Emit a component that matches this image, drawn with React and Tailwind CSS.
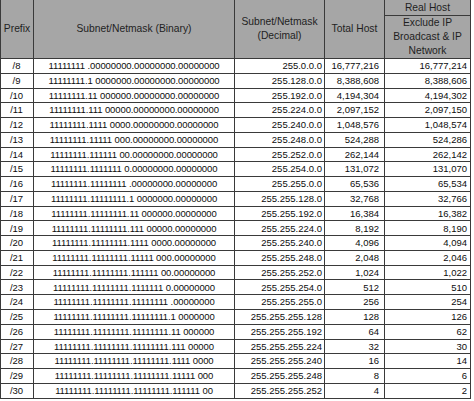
import React from 'react'

const font = { fontFamily: '"Liberation Sans", Arial, sans-serif' }

function binaryMask(p) {
    const bits = '1'.repeat(p) + '0'.repeat(32 - p)
    const dotted = bits.match(/.{8}/g).join('.')
    // split right after the p-th bit
    const idx = p + Math.floor((p - 1) / 8)
    return dotted.slice(0, idx) + ' ' + dotted.slice(idx)
}

function decimalMask(p) {
    const out = []
    for (let i = 0; i < 4; i++) {
        const n = Math.min(8, Math.max(0, p - i * 8))
        out.push(256 - Math.pow(2, 8 - n))
    }
    return out.join('.')
}

const rows = []
for (let p = 8; p <= 30; p++) {
    const total = Math.pow(2, 32 - p)
    rows.push({
        prefix: '/' + p,
        bin: binaryMask(p),
        dec: decimalMask(p),
        total: total.toLocaleString('en-US'),
        real: (total - 2).toLocaleString('en-US'),
    })
}

const head = 'bg-[#a6a6a6] text-[#1f1f1f] border-r border-b border-[#3a3a3a] flex items-center justify-center text-center text-[10.3px] leading-[14px]'
const cell = 'bg-white text-[#0d0d0d] border-r border-b border-[#3a3a3a] flex items-center text-[9.5px] leading-none whitespace-nowrap'

export default function App() {
    return (
        <div className="w-[474px] h-[401px] bg-white overflow-hidden" style={font}>
            <div className="grid w-fit grid-cols-[33px_201px_90px_60px_86px] grid-rows-[16px_43px_repeat(23,14.77px)] border-l border-[#3a3a3a]">
                <div className={head + ' row-span-2'}>Prefix</div>
                <div className={head + ' row-span-2'}>Subnet/Netmask (Binary)</div>
                <div className={head + ' row-span-2'}>Subnet/Netmask<br />(Decimal)</div>
                <div className={head + ' row-span-2'}>Total Host</div>
                <div className={head}>Real Host</div>
                <div className={head}>Exclude IP<br />Broadcast &amp; IP<br />Network</div>
                {rows.map(r => (
                    <React.Fragment key={r.prefix}>
                        <div className={cell + ' justify-center pr-[1px]'}>{r.prefix}</div>
                        <div className={cell + ' justify-center tracking-[-0.1px]'}>{r.bin}</div>
                        <div className={cell + ' justify-end pr-[2px]'}>{r.dec}</div>
                        <div className={cell + ' justify-end pr-[5px]'}>{r.total}</div>
                        <div className={cell + ' justify-end pr-[3px]'}>{r.real}</div>
                    </React.Fragment>
                ))}
            </div>
        </div>
    )
}
